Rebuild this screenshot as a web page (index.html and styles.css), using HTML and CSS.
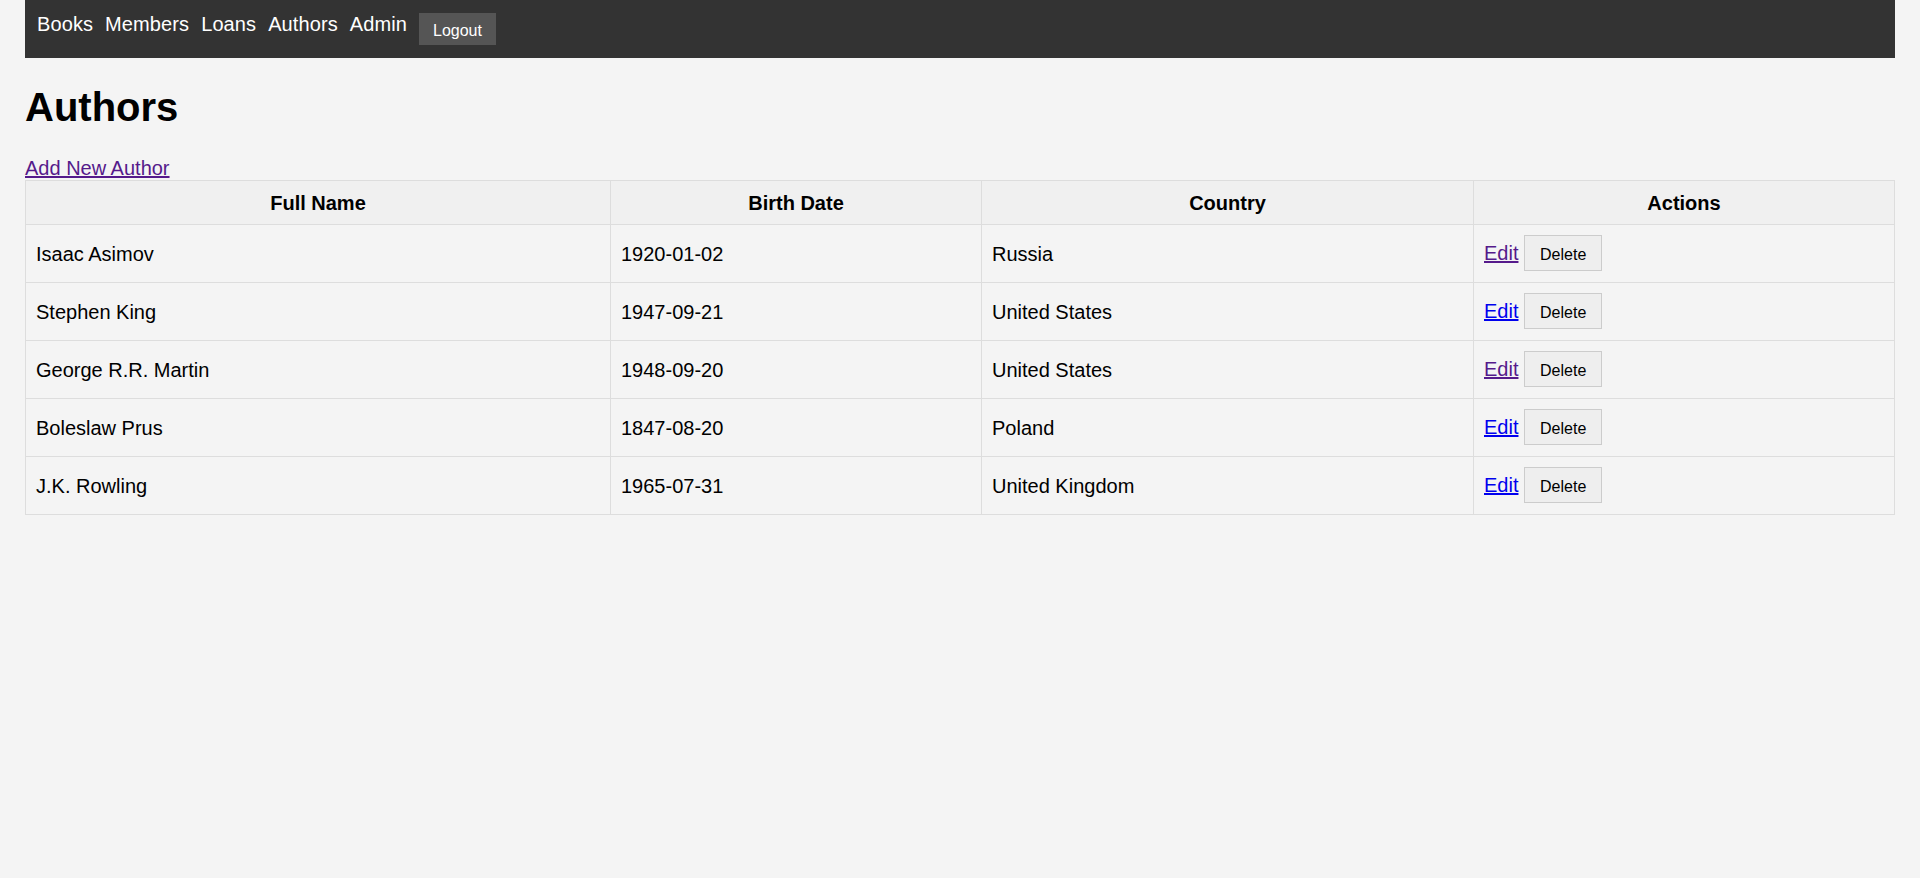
FILE: index.html
```html
<!DOCTYPE html>
<html lang="en">
<head>
<meta charset="utf-8">
<title>Authors</title>
<link rel="stylesheet" href="styles.css">
</head>
<body>
<nav class="navbar">
  <a class="nav-link" href="#books">Books</a>
  <a class="nav-link" href="#members">Members</a>
  <a class="nav-link" href="#loans">Loans</a>
  <a class="nav-link" href="#authors">Authors</a>
  <a class="nav-link" href="#admin">Admin</a>
  <button class="logout-btn" type="button">Logout</button>
</nav>
<h1 class="page-title">Authors</h1>
<a class="link visited" href="#new">Add New Author</a>
<table class="authors-table">
  <thead>
    <tr>
      <th class="col-name">Full Name</th>
      <th class="col-date">Birth Date</th>
      <th class="col-country">Country</th>
      <th class="col-actions">Actions</th>
    </tr>
  </thead>
  <tbody>
    <tr>
      <td>Isaac Asimov</td>
      <td>1920-01-02</td>
      <td>Russia</td>
      <td class="actions"><a class="link visited" href="#e1">Edit</a> <button class="delete-btn" type="button">Delete</button></td>
    </tr>
    <tr>
      <td>Stephen King</td>
      <td>1947-09-21</td>
      <td>United States</td>
      <td class="actions"><a class="link" href="#e2">Edit</a> <button class="delete-btn" type="button">Delete</button></td>
    </tr>
    <tr>
      <td>George R.R. Martin</td>
      <td>1948-09-20</td>
      <td>United States</td>
      <td class="actions"><a class="link visited" href="#e3">Edit</a> <button class="delete-btn" type="button">Delete</button></td>
    </tr>
    <tr>
      <td>Boleslaw Prus</td>
      <td>1847-08-20</td>
      <td>Poland</td>
      <td class="actions"><a class="link" href="#e4">Edit</a> <button class="delete-btn" type="button">Delete</button></td>
    </tr>
    <tr>
      <td>J.K. Rowling</td>
      <td>1965-07-31</td>
      <td>United Kingdom</td>
      <td class="actions"><a class="link" href="#e5">Edit</a> <button class="delete-btn" type="button">Delete</button></td>
    </tr>
  </tbody>
</table>
</body>
</html>
```
FILE: styles.css
```css
html, body {
  background: #f4f4f4;
}
body {
  margin: 0;
  padding: 0 25px;
  font-family: "Liberation Sans", Arial, sans-serif;
  font-size: 20px;
  color: #000;
}
.navbar {
  display: flex;
  align-items: flex-start;
  gap: 12px;
  background: #333;
  padding: 13px 12px;
  height: 58px;
  box-sizing: border-box;
}
.nav-link {
  color: #fff;
  text-decoration: none;
  font-size: 20px;
  line-height: 23px;
  letter-spacing: 0.1px;
}
.logout-btn {
  font-family: "Liberation Sans", Arial, sans-serif;
  font-size: 16px;
  line-height: 18px;
  color: #fff;
  background: #555;
  border: none;
  padding: 9px 14px 5px;
  margin: 0;
  height: 32px;
}
.page-title {
  font-size: 40px;
  font-weight: bold;
  margin: 26.8px 0;
}
.link {
  color: #0000ee;
  text-decoration: underline;
}
.link.visited {
  color: #551a8b;
}
.authors-table {
  width: 100%;
  border-collapse: collapse;
  table-layout: fixed;
}
.authors-table th,
.authors-table td {
  border: 1px solid #ddd;
  padding: 11px 10px 9px;
  text-align: left;
  vertical-align: middle;
  box-sizing: border-box;
}
.authors-table th {
  background: #f0f0f0;
  text-align: center;
  font-weight: bold;
}
.authors-table td {
  height: 58px;
}
.authors-table td.actions {
  padding: 10px;
}
.col-name { width: 585px; }
.col-date { width: 371px; }
.col-country { width: 492px; }
.delete-btn {
  font-family: "Liberation Sans", Arial, sans-serif;
  font-size: 16px;
  line-height: 18px;
  color: #000;
  background: #eee;
  border: 1px solid #ccc;
  padding: 10px 15px 6px;
  margin: 0;
  height: 36px;
  vertical-align: baseline;
}
```
